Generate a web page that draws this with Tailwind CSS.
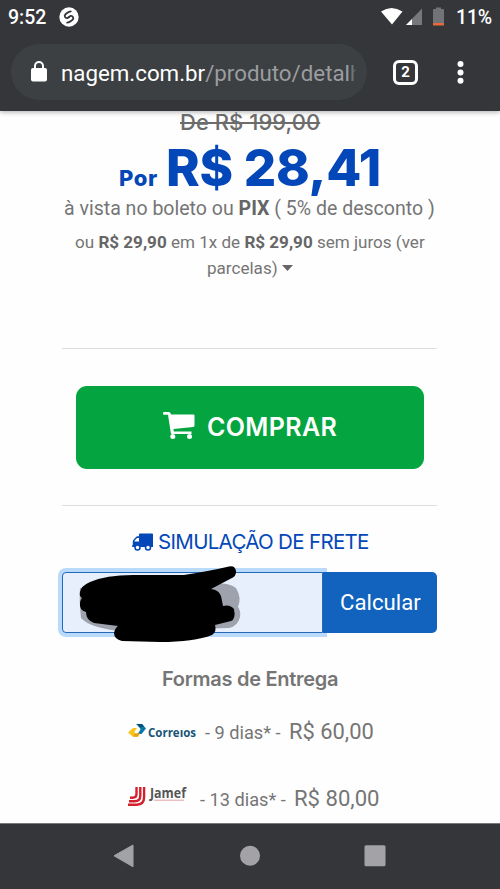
<!DOCTYPE html>
<html lang="pt-BR"><head><meta charset="utf-8"><title>Nagem</title>
<script src="https://cdn.jsdelivr.net/npm/@tailwindcss/browser@4"></script></head>
<body class="w-[500px] h-[889px] overflow-hidden bg-[#fefefe] font-['Roboto',sans-serif] text-[#757575] whitespace-nowrap flex flex-col">
<header class="h-[111px] shrink-0 bg-[#35363a] text-white shadow-[0_1px_5px_#0005]">
  <div class="h-[34px] flex items-center pl-2 pr-[9px] text-[19.5px] font-medium">
    <span class="w-[51px] pt-px">9:52</span>
    <svg class="w-5 h-5" viewBox="0 0 20 20"><circle cx="10" cy="10" r="9.7" fill="#fff"/><g fill="none" stroke="#35363a" stroke-width="1.8" stroke-linecap="round"><path d="M11.8 4.4 C9.8 4.5 8.2 5.7 6.7 7 C4.5 9 6.4 11.4 8.4 11.1 L10.3 9.6"/><path d="M8.2 15.6 C10.2 15.5 11.8 14.3 13.3 13 C15.5 11 13.6 8.6 11.6 8.9 L9.7 10.4"/></g></svg>
    <svg class="ml-auto w-[64px] h-[20px]" viewBox="0 0 64 20"><path d="M0 4.5 Q10.5-2.5 21.5 4.5 L11 17.5Z" fill="#fff"/><path d="M41 1.5V18H25Z" fill="#77787b"/><path d="M31 12V18H25Z" fill="#fff"/><path d="M55 2V.5h5V2h2q1 0 1 1V18H52V3q0-1 1-1Z" fill="#727376"/><path d="M52 16h11v2.5H52Z" fill="#e8683c"/></svg>
    <span class="ml-[11px] w-[35px] pt-px tracking-[-0.2px]">11%</span>
  </div>
  <div class="h-[77px] pl-[11px] pt-[10px] flex">
    <div class="w-[356px] h-[56px] rounded-full bg-[#3c4043] flex items-center pl-5 relative">
      <svg class="w-4 h-[21px] mb-[2px]" viewBox="0 0 16 21"><rect y="7" width="16" height="13.5" rx="2" fill="#fff"/><path d="M4 8V5a4 4 0 0 1 8 0v3" fill="none" stroke="#fff" stroke-width="2"/></svg>
      <div class="ml-[14px] mt-px w-[295px] overflow-hidden text-[22.3px] leading-[32px] text-[#9b9da0]"><span class="text-white">nagem.com.br</span>/produto/detalhe</div>
      <div class="absolute right-[10px] top-3 w-2 h-8 bg-linear-to-r from-[#3c404300] to-[#3c4043]"></div>
    </div>
    <div class="ml-[26px] mt-[15.5px] w-[25px] h-[25px] rounded-[6px] border-[3px] border-white text-[15px] font-bold leading-[19px] text-center">2</div>
    <svg class="ml-[39px] mt-[16px] w-[7px] h-[25px]" viewBox="0 0 7 25" fill="#fff"><circle cx="3.5" cy="4" r="3"/><circle cx="3.5" cy="12.4" r="3"/><circle cx="3.5" cy="20.8" r="3"/></svg>
  </div>
</header>
<main class="h-[712px] shrink-0 px-[62px]">
  <div class="h-[22px] leading-[22px] pl-[118px] font-['Inter',sans-serif] font-medium text-[22px] tracking-[0.04px] line-through decoration-2 text-[#6c6c6c]">De R$ 199,00</div>
  <div class="mt-[6px] h-[57px] leading-[57px] pl-[57px] flex items-baseline font-['Inter',sans-serif] font-extrabold text-[#0447b8]"><span class="w-[47px] text-[22px] tracking-[0.6px]">Por</span><span class="text-[51px] tracking-[-0.3px]">R$ 28,41</span></div>
  <div class="mt-px h-[24px] leading-[24px] pl-[2px] text-[19.55px]">à vista no boleto ou <b class="text-[#666]">PIX</b> ( 5% de desconto )</div>
  <div class="mt-[9px] h-[51px] leading-[25.5px] text-[17.07px]"><div class="pl-[13px]">ou <b class="text-[#666]">R$ 29,90</b> em 1x de <b class="text-[#666]">R$ 29,90</b> sem juros (ver</div><div class="pl-[145px] flex items-center">parcelas)<svg class="ml-1 w-[11px] h-[6px]" viewBox="0 0 11 6"><path d="M0 0H11L5.5 6Z" fill="#666"/></svg></div></div>
  <div class="mt-[67px] h-[1px] w-[375px] bg-[#dedede]"></div>
  <button class="mt-[37px] ml-[14px] w-[348px] h-[83px] rounded-[11px] bg-[#04a540] text-white flex items-center pl-[87px] font-['Inter',sans-serif] font-semibold text-[25px] tracking-[0.35px]">
    <svg class="w-[32px] h-[28px] mb-1" viewBox="0 0 32 28" fill="#fff"><path d="M1 0H6Q7.5 0 8 2.6H30.5Q31.5 2.6 31.5 3.6V13.5Q31.5 14.7 30.3 14.9L10.5 17.1 10.8 19.4H28.5V22H9Q8 22 7.8 21L5 2.8H1Q0 2.8 0 1.4T1 0Z"/><circle cx="9.8" cy="24.6" r="2.5"/><circle cx="26.5" cy="24.6" r="2.5"/></svg>
    <span class="ml-[12px]">COMPRAR</span></button>
  <div class="mt-[36px] h-[1px] w-[375px] bg-[#dedede]"></div>
  <div class="mt-[24px] h-[24px] pl-[70px] flex items-center text-[#0447b8] font-['Inter',sans-serif] text-[20.5px] leading-[24px] tracking-[-0.68px]">
    <svg class="w-[21px] h-[18px]" viewBox="0 0 21 18"><path d="M8 0.5H20q1 0 1 1V14H1q-1 0-1-1 0-.8.8-1V8.5q0-.8.6-1.4L4 4q.7-.7 1.5-.7H7V1.5q0-1 1-1Z" fill="currentColor"/><path d="M2.5 8.5H7V5H5.4Q5 5 4.6 5.4L2.5 7.7Z" fill="#fff"/><g fill="#fff" stroke="currentColor" stroke-width="1.5"><circle cx="5.5" cy="14.5" r="2.5"/><circle cx="16" cy="14.5" r="2.5"/></g></svg>
    <span class="ml-[5px]">SIMULAÇÃO DE FRETE</span></div>
  <div class="relative mt-[18px] h-[61px] w-[375px] flex">
    <div class="w-[261px] rounded-l-[4px] border-[1.5px] border-[#2469b8] bg-[#e8effc] shadow-[0_0_0_4px_#b9dafa]"></div>
    <div class="relative w-[114px] rounded-r-[5px] bg-[#1163be] text-white text-[22.2px] leading-[61px] pl-[17px]">Calcular</div>
    <svg class="absolute left-[13px] top-[-12px] w-[170px] h-[90px]" viewBox="75 560 170 90"><path d="M80 588Q79 600 81 618Q90 628 120 631L229 628Q238 626 240 617Q241 611 238 607Q242 598 236 588Q228 582 215 584Z" fill="#9da2ad"/><path d="M80 592Q81 586 90 582Q106 575 133 575H184Q210 571 229 566.5Q235 565 236 571Q237 576 230 579L211 589Q219 590 221 596L223 606Q230 604 234 609Q236 619 231 621L215 625Q217 632 212 635Q194 642 160 642L122 641Q114 639 114 633Q115 628 118 626L94 623Q86 620 86 612Q79 610 80 603Q80 600 82 598Q79 596 80 592Z" fill="#000"/></svg>
  </div>
  <div class="mt-[34px] h-[24px] leading-[24px] pl-[100px] font-['Inter',sans-serif] font-semibold text-[20px] tracking-[-0.28px]">Formas de Entrega</div>
  <div class="mt-[26px] h-[30px] leading-[30px] pl-[66px] flex items-baseline text-[18.2px]">
    <svg class="w-[77px] h-[20px] self-center overflow-visible" viewBox="0 0 77 20"><path d="M8 2H14L18 6.5 13.5 12H9.5L12 8.5Q13 7 11.8 5.8Z" fill="#0878a8"/><path d="M9 2h5l2 2.5-4.5 1Z" fill="#064f78"/><path d="M5 6H9L7 9Q6 10 7 11.2L10 14.5H4.5L0 10.5Z" fill="#f8c51b"/><path d="M7 11.2H12L10 14.8H5Z" fill="#eba20f"/><text x="20" y="14.5" textLength="48" lengthAdjust="spacingAndGlyphs" font-family="Open Sans" font-size="12.5" font-weight="700" fill="#175477">Correıos</text></svg>
    <span class="w-[84px]">- 9 dias* -</span><span class="text-[21.9px]">R$ 60,00</span></div>
  <div class="mt-[36px] h-[30px] leading-[30px] pl-[65px] flex items-baseline text-[18.2px]">
    <svg class="w-[73px] h-[24px] self-center overflow-visible" viewBox="0 0 73 24"><g transform="translate(0 -1)"><g fill="none" stroke="#d2202d" stroke-width="2.4"><path d="M9.5 2V9Q9.5 12.7 5.5 12.7H3"/><path d="M13.3 2V10.5Q13.3 16.2 7.5 16.2H2"/><path d="M17.1 2V12Q17.1 19.7 9.5 19.7H1"/></g><text x="23" y="13" textLength="36" lengthAdjust="spacingAndGlyphs" font-family="Open Sans" font-size="13.5" font-weight="700" fill="#555">Jamef</text><path d="M27 15.2H57" stroke="#dc8b8f" stroke-width=".8"/></g></svg>
    <span class="w-[94px]">- 13 dias* -</span><span class="text-[22.1px]">R$ 80,00</span></div>
</main>
<nav class="h-[66px] shrink-0 bg-[#35363a] border-t border-[#77787a]">
  <svg class="w-[500px] h-[65px]" viewBox="0 824 500 65" fill="#a3a3a7"><path d="M114 855.8 133 845V866.8Z" stroke="#a3a3a7" stroke-linejoin="round"/><circle cx="250" cy="855.8" r="10"/><rect x="364.5" y="845.3" width="21" height="21" rx="1.5"/></svg>
</nav>
</body></html>
